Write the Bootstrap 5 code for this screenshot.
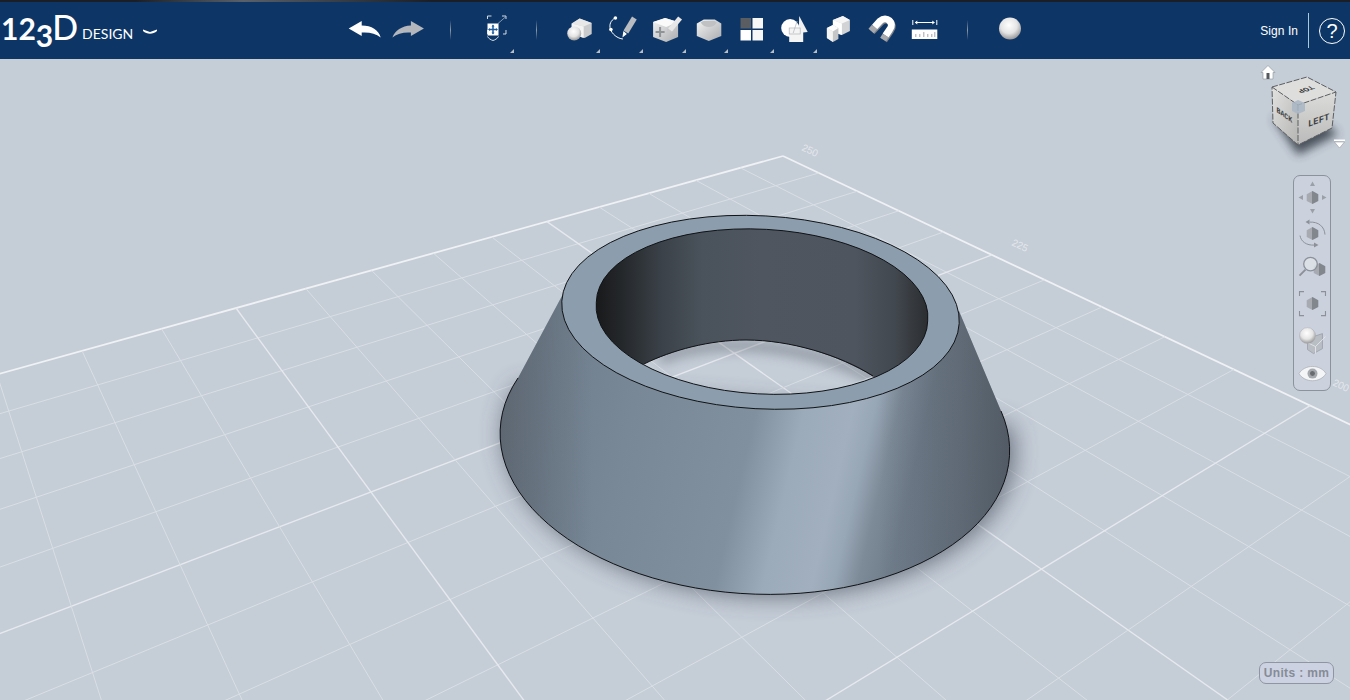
<!DOCTYPE html>
<html lang="en">
<head>
  <meta charset="UTF-8" />
  <meta name="viewport" content="width=device-width, initial-scale=1.0"/>
  <title>123D Design</title>
  <link href="https://cdn.jsdelivr.net/npm/bootstrap@5.3.0/dist/css/bootstrap.min.css" rel="stylesheet">
  <style>
    html, body {
      height: 100%;
      overflow: hidden;
    }

    body {
      background-color: #c5cdd7;
      font-family: "Liberation Sans", Arial, sans-serif;
    }

    .app-bar {
      height: 59px;
      background: #0d3667;
      justify-content: flex-start;
      flex-wrap: nowrap;
      position: relative;
    }

    .app-bar::before {
      content: "";
      position: absolute;
      left: 0;
      right: 0;
      top: 0;
      height: 1.5px;
      background: linear-gradient(90deg, #1a1f27 0, #1a1f27 10%, #59606a 18%, #3c434c 24%, #1a1f27 32%, #1a1f27 100%);
    }

    .logo-box {
      width: 343.3px;
      height: 59px;
      padding-left: 1px;
      color: #fff;
      font-family: Lato, "Open Sans", sans-serif;
      line-height: 1;
      text-decoration: none;
    }

    .logo-nums {
      font-size: 30px;
      font-weight: 700;
      margin-top: 13px;
    }

    .logo-three {
      position: relative;
      top: 7px;
    }

    .logo-d {
      font-size: 34px;
      font-weight: 500;
      margin-top: 10px;
      margin-left: -1px;
    }

    .logo-word {
      font-size: 14px;
      margin-left: 4px;
      margin-top: 27px;
    }

    .logo-arrow {
      margin-left: 10px;
      margin-top: 29px;
    }

    .tool-slot {
      width: 43.3px;
      height: 59px;
      flex: none;
      position: relative;
    }

    .tool-slot svg {
      display: block;
      width: 100%;
      height: 100%;
    }

    .tool-first {
      margin-left: 2px;
    }

    .tool-more {
      position: absolute;
      top: 49px;
      width: 0;
      height: 0;
      border-left: 4px solid transparent;
      border-bottom: 4px solid #b8bec6;
    }

    .tool-gap {
      width: 1px;
      height: 20px;
      margin: 0 20px;
      flex: none;
      background: linear-gradient(180deg, #0d3667, #8d99a5 50%, #0d3667);
    }

    .account-box {
      margin-top: 2px;
    }

    .sign-link {
      font-size: 12px;
      letter-spacing: .05px;
      color: #fff;
      text-decoration: none;
    }

    .help-box {
      width: 42px;
      height: 35px;
      margin-left: 10px;
      border-left: 1px solid #a6cbdc;
      padding-left: 10px;
    }

    .help-ring {
      width: 26px;
      height: 26px;
      border: 1.5px solid #fff;
      border-radius: 50%;
      color: #fff;
      font-size: 20px;
      line-height: 1;
    }

    .stage {
      height: 641px;
      position: relative;
      overflow: hidden;
    }

    .stage-art {
      position: absolute;
      left: 0;
      top: 0;
      width: 1350px;
      height: 641px;
    }

    .cube-art {
      position: absolute;
      left: 1250px;
      top: 1px;
      width: 100px;
      height: 110px;
    }

    .view-tools {
      position: absolute;
      left: 1293px;
      top: 116px;
      width: 38px;
      height: 216px;
      padding-top: 4.4px;
      background: #cbd1dd;
      border: 1.5px solid #8b929c;
      border-radius: 7px;
    }

    .view-tools svg {
      display: block;
      width: 35px;
      height: 35.2px;
      flex: none;
    }

    .units-tag {
      position: absolute;
      right: 16px;
      bottom: 16px;
      height: 22px;
      width: 75px;
      background: #ccd2e1;
      border: 1.5px solid #8f95a1;
      border-radius: 7px;
      color: #868c97;
      font-size: 12px;
      font-weight: 700;
      letter-spacing: .35px;
    }
  </style>
</head>
<body>
  <!-- shared gradients for the toolbar icons -->
  <svg width="0" height="0" class="position-absolute">
    <defs>
      <linearGradient id="iconSide" x1="0" y1="0" x2="1" y2="1">
        <stop offset="0" stop-color="#f4f4f4"/>
        <stop offset="1" stop-color="#a9abae"/>
      </linearGradient>
      <radialGradient id="iconBall" cx=".45" cy=".35" r=".68">
        <stop offset="0" stop-color="#ffffff"/>
        <stop offset=".55" stop-color="#e4e4e4"/>
        <stop offset="1" stop-color="#8f8f8f"/>
      </radialGradient>
      <linearGradient id="hexFill" x1="0" y1="0" x2="1" y2="0">
        <stop offset="0" stop-color="#a7abb1"/>
        <stop offset=".5" stop-color="#a7abb1"/>
        <stop offset=".5" stop-color="#82868d"/>
        <stop offset="1" stop-color="#82868d"/>
      </linearGradient>
      <polygon id="hexNode" points="0,-6.5 5.8,-3.3 5.8,3.3 0,6.5 -5.8,3.3 -5.8,-3.3" fill="url(#hexFill)"/>
    </defs>
  </svg>

  <nav class="navbar app-bar p-0">
    <a class="logo-box d-flex align-items-start flex-none" href="#">
      <span class="logo-nums">12<span class="logo-three">3</span></span>
      <span class="logo-d">D</span>
      <span class="logo-word">DESIGN</span>
      <svg class="logo-arrow" width="14" height="6" viewBox="0 0 14 6"><path d="M0 .5 7 3l7-2.500V2C10 5.500 4 5.500 0 2Z" fill="#fff"/></svg>
    </a>

    <div class="tool-slot">
      <svg viewBox="343.3 0 43.3 59"><path d="M349 28.500 362 21v4.500c10 0 17 4.500 19 12-5-4-11-5.500-19-5v3.500Z" fill="#fff"/></svg>
    </div>
    <div class="tool-slot">
      <svg viewBox="386.6 0 43.3 59"><path d="M423.500 28.500 410.500 21v4.500c-9 .5-16 5-18.500 12 5-4 11-5.500 18.500-5v3.500Z" fill="#b4b8bd"/></svg>
    </div>
    <div class="tool-gap"></div>
    <div class="tool-slot tool-first">
      <svg viewBox="473 0 43.3 59" fill="none">
        <path d="M487.500 19v-3h4M502 16h4v3M487.500 30v4M506 30v4h-3" stroke="#d7dce2" stroke-width="1"/>
        <path d="M498 23.500 506 16.500" stroke="#9fb0c4" stroke-width=".8"/>
        <rect x="487.500" y="23.500" width="11" height="12" fill="#fff"/>
        <path d="M493 25.500v8M489.500 29.500h7" stroke="#1f5c9c" stroke-width="1.500"/>
        <path d="M491.500 26.500l1.500-2 1.500 2zM491.500 32.500l1.500 2 1.500-2zM490 28l-2 1.500 2 1.500zM496 28l2 1.500-2 1.500z" fill="#1f5c9c"/>
        <path d="M487.500 36.500c1 2 3.500 3.500 5.500 4 2-.5 4.500-2 5.500-4" stroke="#d7dce2" stroke-width="1"/>
      </svg>
      <span class="tool-more" style="right:2px"></span>
    </div>
    <div class="tool-gap"></div>
    <div class="tool-slot">
      <svg viewBox="557.3 0 43.3 59">
        <path d="M572 23.500 580 18.500l12 4.500v11l-7 4-13-4Z" fill="#c9cacc"/>
        <path d="M572 23.500 580 18.500l12 4.500-8 3.500Z" fill="#e8e8e8"/>
        <path d="M572 23.500 584 26.500V38l-12-4Z" fill="#f4f4f4"/>
        <circle cx="574.500" cy="33.500" r="7" fill="url(#iconBall)"/>
      </svg>
      <span class="tool-more" style="right:0"></span>
    </div>
    <div class="tool-slot">
      <svg viewBox="600.6 0 43.3 59" fill="none">
        <path d="M615.500 18c-4 2.500-6 6.500-4.500 11 1.500 5 7 9.500 12.500 10" stroke="#fff" stroke-width="1"/>
        <circle cx="616" cy="18" r="1.800" fill="#fff"/>
        <circle cx="611.500" cy="29.500" r="1.800" fill="#fff"/>
        <path d="M635 18 626.500 32" stroke="#b9bcc0" stroke-width="5.500"/>
        <path d="M624 31 623 37.500l4.500-3.500Z" fill="#fff"/>
      </svg>
      <span class="tool-more" style="right:1px"></span>
    </div>
    <div class="tool-slot">
      <svg viewBox="643.9 0 43.3 59" fill="none">
        <path d="M653 22l12-4 13 4v15l-12 5-13-5Z" fill="url(#iconSide)"/>
        <path d="M653 22l12-4 13 4-12 5Z" fill="#fafafa"/>
        <path d="M660 27v10M655.500 32h9" stroke="#8f9296" stroke-width="2"/>
        <path d="M680 18 670 30" stroke="#e8e8e8" stroke-width="5"/>
        <path d="M667.500 28.500l-1.500 5 4.500-2.500Z" fill="#c8c8c8"/>
      </svg>
      <span class="tool-more" style="right:1px"></span>
    </div>
    <div class="tool-slot">
      <svg viewBox="687.2 0 43.3 59">
        <path d="M697 23.500 704 19.500h11l6.500 4v12.500L709 41l-12-5Z" fill="url(#iconSide)"/>
        <path d="M701 22.500c3 6 13 6 16 0-1.500-1-2-1.500-3-1.500h-10c-1 0-2 .5-3 1.500Z" fill="#bfc1c3"/>
      </svg>
      <span class="tool-more" style="right:2px"></span>
    </div>
    <div class="tool-slot">
      <svg viewBox="730.5 0 43.3 59">
        <rect x="741" y="18" width="10.500" height="10.500" fill="#5a5d61"/>
        <rect x="753" y="18" width="10.500" height="10.500" fill="#f7f7f7"/>
        <rect x="741" y="30" width="10.500" height="10.500" fill="#fff"/>
        <rect x="753" y="30" width="10.500" height="10.500" fill="#f7f7f7"/>
      </svg>
      <span class="tool-more" style="right:0"></span>
    </div>
    <div class="tool-slot">
      <svg viewBox="773.8 0 43.3 59" fill="none">
        <circle cx="790" cy="28" r="9" fill="#fff"/>
        <path d="M799 16l8.500 16-9 1Z" fill="#f0f0f0"/>
        <rect x="789" y="28.500" width="14" height="13.500" fill="#f4f4f4"/>
        <rect x="789" y="28" width="11" height="6" stroke="#aeb2b7" stroke-width=".7"/>
        <path d="M797 21 793 33" stroke="#aeb2b7" stroke-width=".7"/>
      </svg>
      <span class="tool-more" style="right:0"></span>
    </div>
    <div class="tool-slot">
      <svg viewBox="817.1 0 43.3 59">
        <path d="M833 20 843 16l7 4v11l-8 4-9-3Z" fill="#d2d3d5"/>
        <path d="M833 20 843 16l7 4-8 3.500Z" fill="#f6f6f6"/>
        <path d="M833 20 842 23.500V35l-9-3Z" fill="#fff"/>
        <path d="M827 28 833 25l5.500 3v11l-5.500 3-6-4Z" fill="#c5c6c8"/>
        <path d="M827 28 833 31.500V42l-6-4Z" fill="#f4f4f4"/>
        <path d="M827 28 833 25l5.500 3-5.500 3.500Z" fill="#fdfdfd"/>
      </svg>
    </div>
    <div class="tool-slot">
      <svg viewBox="860.400 0 43.3 59" fill="none">
        <path d="M871.500 30.500 880.500 21c6.500-6 15 2 9.500 8.500l-6.500 9.500" stroke="#7f848b" stroke-width="7" transform="translate(.9 1.200)"/>
        <path d="M875 27 880.500 21c6.500-6 15 2 9.500 8.500l-4 6" stroke="#fff" stroke-width="7"/>
        <path d="M871.500 31 875 27M883.500 39.500l2.500-4" stroke="#a7a9ac" stroke-width="7"/>
      </svg>
    </div>
    <div class="tool-slot">
      <svg viewBox="903.7 0 43.3 59" fill="none">
        <path d="M912.500 20v5M936.500 20v5M915 22.500h19" stroke="#fff" stroke-width="1"/>
        <path d="M917 20.500l-2.500 2 2.500 2zM932 20.500l2.500 2-2.500 2z" fill="#fff"/>
        <rect x="911.500" y="29.500" width="25.500" height="9.500" fill="#fff"/>
        <path d="M915.500 37v-3M919.500 37v-3M923.500 37v-5M927.500 37v-3M931.500 37v-3M934.500 37v-5" stroke="#8c9095" stroke-width=".8"/>
      </svg>
    </div>
    <div class="tool-gap"></div>
    <div class="tool-slot">
      <svg viewBox="988 0 43.3 59"><circle cx="1010" cy="28.500" r="11" fill="url(#iconBall)"/></svg>
    </div>

    <div class="account-box ms-auto d-flex align-items-center">
      <a class="sign-link" href="#">Sign In</a>
      <div class="help-box d-flex align-items-center">
        <div class="help-ring d-flex align-items-center justify-content-center">?</div>
      </div>
    </div>
  </nav>

  <main class="stage">
    <svg id="sceneArt" class="stage-art" viewBox="0 59 1350 641">
      <defs>
        <linearGradient id="bodyShade" gradientUnits="userSpaceOnUse" x1="500" y1="400" x2="1010" y2="520">
          <stop offset="0" stop-color="#6d7b89"/>
          <stop offset=".25" stop-color="#788897"/>
          <stop offset=".48" stop-color="#80909f"/>
          <stop offset=".57" stop-color="#9cabba"/>
          <stop offset=".66" stop-color="#a1afbe"/>
          <stop offset=".7" stop-color="#98a7b6"/>
          <stop offset=".745" stop-color="#7d8a98"/>
          <stop offset=".8" stop-color="#707d8b"/>
          <stop offset="1" stop-color="#6a7785"/>
        </linearGradient>
        <linearGradient id="bodyEdges" gradientUnits="userSpaceOnUse" x1="500" y1="0" x2="1012" y2="0">
          <stop offset="0" stop-color="#4d535b" stop-opacity=".5"/>
          <stop offset=".18" stop-color="#4d535b" stop-opacity="0"/>
          <stop offset=".74" stop-color="#3c4249" stop-opacity="0"/>
          <stop offset=".9" stop-color="#3c4249" stop-opacity=".3"/>
          <stop offset="1" stop-color="#3c4249" stop-opacity=".55"/>
        </linearGradient>
        <linearGradient id="wallShade" gradientUnits="userSpaceOnUse" x1="596" y1="0" x2="928" y2="0">
          <stop offset="0" stop-color="#18191b"/>
          <stop offset=".08" stop-color="#25282b"/>
          <stop offset=".2" stop-color="#3b4249"/>
          <stop offset=".32" stop-color="#4a525b"/>
          <stop offset=".5" stop-color="#4f565f"/>
          <stop offset=".78" stop-color="#4e555e"/>
          <stop offset=".9" stop-color="#42484f"/>
          <stop offset="1" stop-color="#2b2d30"/>
        </linearGradient>
        <filter id="groundBlur" x="-20%" y="-20%" width="140%" height="140%">
          <feGaussianBlur stdDeviation="12"/>
        </filter>
        <filter id="holeBlur" x="-20%" y="-50%" width="140%" height="200%">
          <feGaussianBlur stdDeviation="6"/>
        </filter>
        <clipPath id="holeClip">
          <ellipse cx="762" cy="311.600" rx="166" ry="80.600" transform="rotate(3.200 762 311.600)"/>
        </clipPath>
      </defs>

      <g id="gridLines"></g>

      <text transform="translate(801 150) rotate(25)" font-size="10" fill="#e4e7eb">250</text>
      <text transform="translate(1011 245) rotate(25)" font-size="10" fill="#e4e7eb">225</text>
      <text transform="translate(1332 385) rotate(25)" font-size="10" fill="#e4e7eb">200</text>

      <path d="M518 386A255 152 3 1 0 1010 425Z" fill="#454e5b" opacity=".75" filter="url(#groundBlur)"/>
      <g clip-path="url(#holeClip)">
        <path d="M660 360C700 338 800 338 880 382" fill="none" stroke="#59616b" stroke-width="10" opacity=".5" filter="url(#holeBlur)"/>
      </g>

      <path d="M563 294 518 378A255 152 3 1 0 1001 411L959 311 950 318A190 88 3.200 1 1 572 300Z" fill="url(#bodyShade)"/>
      <path d="M563 294 518 378A255 152 3 1 0 1001 411L959 311 950 318A190 88 3.200 1 1 572 300Z" fill="url(#bodyEdges)"/>
      <path d="M518 378A255 152 3 1 0 1001 411" fill="none" stroke="#101214" stroke-width="1"/>

      <path d="M640 366A171 85 3.200 1 1 877 379C840 355 790 340 746 340 710 340 672 350 640 366Z" fill="url(#wallShade)"/>
      <path d="M644 364C672 350 710 340 746 340 790 340 840 355 873 376" fill="none" stroke="#101214" stroke-width="1"/>
      <path d="M561.800 301.200A199 96.500 3.200 1 1 959.200 323.400 199 96.500 3.200 1 1 561.800 301.200ZM596.300 302.300A166 80.600 3.200 1 1 927.700 320.900 166 80.600 3.200 1 1 596.300 302.300Z" fill="#8c9dae" fill-rule="evenodd" stroke="#101214" stroke-width="1"/>
    </svg>

    <svg class="cube-art" viewBox="1250 60 100 110">
      <defs>
        <linearGradient id="cubeLeft" x1="0" y1="0" x2="1" y2="1">
          <stop offset="0" stop-color="#e2e2e0"/>
          <stop offset="1" stop-color="#b4b4b2"/>
        </linearGradient>
        <linearGradient id="cubeRight" x1="0" y1="0" x2="0" y2="1">
          <stop offset="0" stop-color="#dcdcda"/>
          <stop offset="1" stop-color="#bababa"/>
        </linearGradient>
        <filter id="cubeBlur" x="-30%" y="-30%" width="160%" height="160%">
          <feGaussianBlur stdDeviation="5"/>
        </filter>
      </defs>
      <path d="M1273 118 1298 155 1338 134 1318 118Z" fill="#353c47" opacity=".85" filter="url(#cubeBlur)"/>
      <path d="M1272 87 1298 105V145L1273 123Z" fill="url(#cubeLeft)"/>
      <path d="M1298 105 1336 92 1332 128 1298 145Z" fill="url(#cubeRight)"/>
      <path d="M1272 87 1307 77 1336 92 1298 105Z" fill="#dededc"/>
      <g fill="none" stroke="#5c5e61" stroke-width="1" stroke-dasharray="6 1.500">
        <path d="M1272 87 1307 77 1336 92 1332 128 1298 145 1273 123Z"/>
        <path d="M1272 87 1298 105 1336 92M1298 105V145"/>
      </g>
      <polygon points="1298,100 1305,103 1305,111 1298,114 1292,111 1292,103" fill="#a9b6c6" opacity=".85"/>
      <text transform="matrix(-.82 .28 -.62 -.46 1304 88)" font-family="Liberation Mono, monospace" font-weight="700" font-size="10" fill="#3d3f42" text-anchor="middle">TOP</text>
      <text transform="matrix(.82 .57 0 1 1276.500 112)" font-family="Liberation Mono, monospace" font-weight="700" font-size="8" fill="#3d3f42">BACK</text>
      <text transform="matrix(.94 -.34 0 1 1308 127)" font-family="Liberation Mono, monospace" font-weight="700" font-size="9.500" fill="#3d3f42">LEFT</text>
      <path d="M1268 65.500 1275 72.500H1273V79H1263V72.500H1261Z" fill="#fff" stroke="#8c9098" stroke-width=".6"/>
      <rect x="1266.500" y="73" width="3" height="6" fill="#55585c"/>
      <rect x="1334" y="139.500" width="11" height="1.500" fill="#fff"/>
      <path d="M1334.500 142H1344.500L1339.500 148Z" fill="#fff" stroke="#8c9098" stroke-width=".5"/>
    </svg>

    <div class="view-tools d-flex flex-column align-items-center">
      <svg viewBox="-17.500 -17.600 35 35.200">
        <use href="#hexNode"/>
        <path d="M0-16-2.500-11.500H2.500ZM0 16-2.500 11.500H2.500ZM-14 0-9.500-2.500V2.500ZM14 0 9.500-2.500V2.500Z" fill="#9ba0a7"/>
      </svg>
      <svg viewBox="-17.500 -17.600 35 35.200" fill="none">
        <use href="#hexNode"/>
        <path d="M-3-11.500C6-12 12-7 12.500 1M-12.500 2C-11.500 8-6 12 2 11.500" stroke="#8c9199" stroke-width="1"/>
        <path d="M-3-14V-9L-7-11.500ZM1.500 9V14L6 11.500Z" fill="#8c9199"/>
      </svg>
      <svg viewBox="-17.500 -17.600 35 35.200" fill="none">
        <use href="#hexNode" x="7" y="1"/>
        <path d="M-7 1-13 7" stroke="#8c9199" stroke-width="2"/>
        <circle cx="-2" cy="-4.500" r="6.800" fill="#dfe3ea" fill-opacity=".8" stroke="#8c9199" stroke-width="1.300"/>
      </svg>
      <svg viewBox="-17.500 -17.600 35 35.200" fill="none">
        <use href="#hexNode"/>
        <path d="M-13-7.500V-12H-8.500M8.500-12H13V-7.500M13 7.500V12H8.500M-8.500 12H-13V7.500" stroke="#8c9199" stroke-width="1.100"/>
      </svg>
      <svg viewBox="-17.500 -17.600 35 35.200" fill="none">
        <path d="M-5 0 10-5V10L1 15-5 11Z" fill="#b9bec5" stroke="#9a9fa6" stroke-width=".8"/>
        <path d="M-5 4 3 8V15M3 8 13-2" stroke="#e8ebef" stroke-width=".8"/>
        <circle cx="-5" cy="-3" r="8" fill="url(#iconBall)" stroke="#a9adb4" stroke-width=".5"/>
      </svg>
      <svg viewBox="-17.500 -17.600 35 35.200">
        <path d="M-13.500 0C-8-9.500 8-9.500 13.500 0 8 9.500-8 9.500-13.500 0Z" fill="#f4f5f7" stroke="#a0a4ab" stroke-width=".6"/>
        <circle r="5" fill="#a6a9ae"/>
        <circle r="2.500" fill="#686b70"/>
      </svg>
    </div>

    <div class="units-tag d-flex align-items-center justify-content-center">Units : mm</div>
  </main>

  <script src="https://cdn.jsdelivr.net/npm/bootstrap@5.3.0/dist/js/bootstrap.bundle.min.js"></script>

  <script>
    // ground plane homography, fitted to the grid corners in the screenshot
    const project = (u, v) => {
      const s = u / 10, t = v / 5;
      const w = 1 - 0.2410 * s - 0.17155 * t;
      return [(-603.9 * s + 38.8 * t + 783) / w, (77.8 * s + 55.2 * t + 156) / w];
    };
    const gridLines = document.getElementById("gridLines");

    function addLine(a, b, major, edge) {
      const line = document.createElementNS("http://www.w3.org/2000/svg", "line");
      line.setAttribute("x1", a[0]);
      line.setAttribute("y1", a[1]);
      line.setAttribute("x2", b[0]);
      line.setAttribute("y2", b[1]);
      line.setAttribute("stroke", edge ? "#eff1f4" : major ? "#e6e9ed" : "#dadfe5");
      line.setAttribute("stroke-width", edge ? 1.8 : major ? 1.4 : 1);
      gridLines.appendChild(line);
    }

    for (let n = 0; n <= 50; n++) {
      // stop the lines short of the camera plane
      const maxV = Math.min(50, (1 - 0.2410 * n / 10 - 0.05) / 0.17155 * 5);
      const maxU = Math.min(50, (1 - 0.17155 * n / 5 - 0.05) / 0.2410 * 10);
      if (maxV > 0) addLine(project(n, 0), project(n, maxV), n % 5 === 0, n === 0);
      if (maxU > 0) addLine(project(0, n), project(maxU, n), n % 5 === 0, n === 0);
    }
  </script>
</body>
</html>
